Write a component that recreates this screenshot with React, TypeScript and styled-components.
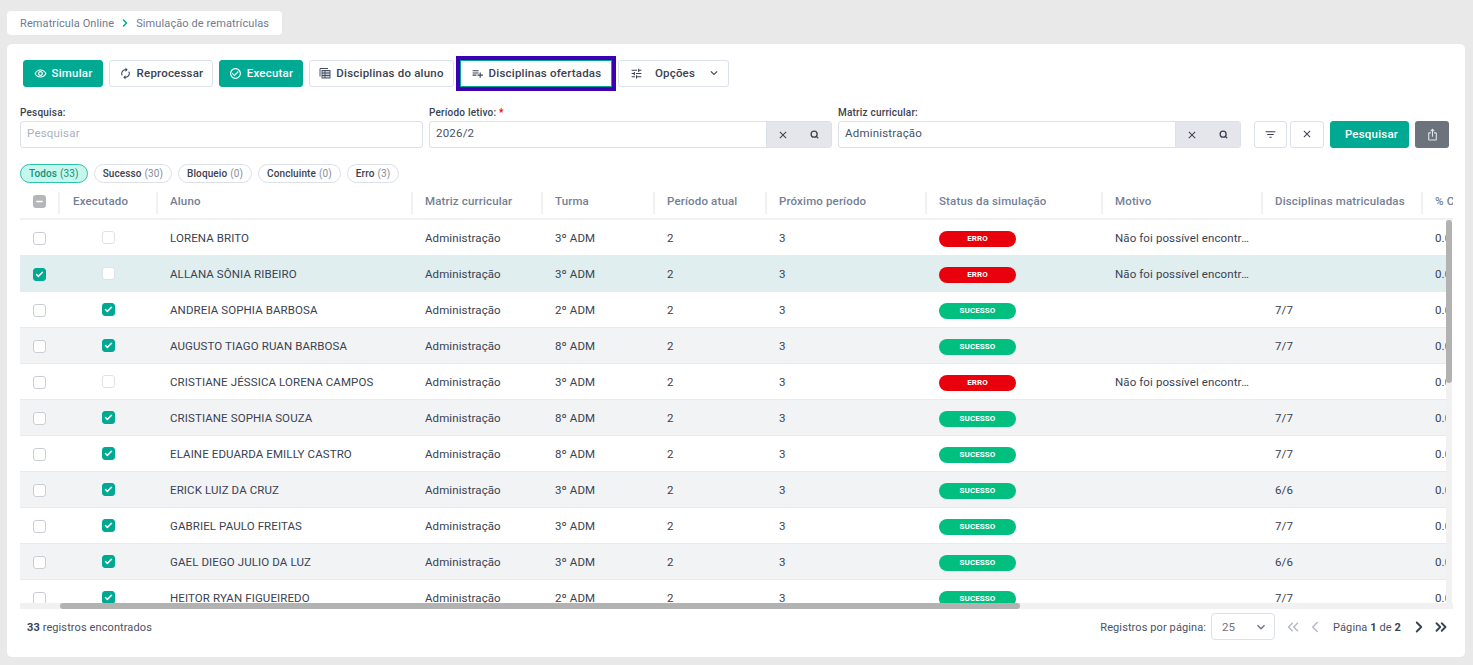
import React from 'react';
import styled, { createGlobalStyle } from 'styled-components';
import {
  ChevronRight,
  ChevronLeft,
  ChevronsLeft,
  ChevronsRight,
  Check,
  Minus,
  Search,
} from 'lucide-react';
import {
  MdAutorenew,
  MdCheckCircleOutline,
  MdClose,
  MdFilterList,
  MdIosShare,
  MdKeyboardArrowDown,
  MdOutlineRemoveRedEye,
  MdPlaylistAdd,
  MdTune,
} from 'react-icons/md';

const GRID = '39px 98px 255px 130px 112px 112px 160px 176px 160px 160px 120px';

interface Student {
  name: string;
  turma: string;
  ok: boolean;
  disc?: string;
  selected?: boolean;
}

const students: Student[] = [
  { name: 'LORENA BRITO', turma: '3º ADM', ok: false },
  { name: 'ALLANA SÔNIA RIBEIRO', turma: '3º ADM', ok: false, selected: true },
  { name: 'ANDREIA SOPHIA BARBOSA', turma: '2º ADM', ok: true, disc: '7/7' },
  { name: 'AUGUSTO TIAGO RUAN BARBOSA', turma: '8º ADM', ok: true, disc: '7/7' },
  { name: 'CRISTIANE JÉSSICA LORENA CAMPOS', turma: '3º ADM', ok: false },
  { name: 'CRISTIANE SOPHIA SOUZA', turma: '8º ADM', ok: true, disc: '7/7' },
  { name: 'ELAINE EDUARDA EMILLY CASTRO', turma: '8º ADM', ok: true, disc: '7/7' },
  { name: 'ERICK LUIZ DA CRUZ', turma: '3º ADM', ok: true, disc: '6/6' },
  { name: 'GABRIEL PAULO FREITAS', turma: '3º ADM', ok: true, disc: '7/7' },
  { name: 'GAEL DIEGO JULIO DA LUZ', turma: '3º ADM', ok: true, disc: '6/6' },
  { name: 'HEITOR RYAN FIGUEIREDO', turma: '2º ADM', ok: true, disc: '7/7' },
];

const headers = [
  'Executado',
  'Aluno',
  'Matriz curricular',
  'Turma',
  'Período atual',
  'Próximo período',
  'Status da simulação',
  'Motivo',
  'Disciplinas matriculadas',
  '% Conclusão',
];

const pills = [
  { label: 'Todos', count: 33, active: true },
  { label: 'Sucesso', count: 30 },
  { label: 'Bloqueio', count: 0 },
  { label: 'Concluinte', count: 0 },
  { label: 'Erro', count: 3 },
];

const GlobalStyle = createGlobalStyle`
  html, body {
    margin: 0;
    height: 665px;
    overflow: hidden;
    background: #e9e9e9;
    font-family: Roboto, "Liberation Sans", sans-serif;
    font-size: 12px;
    color: #3a4252;
  }
  * {
    box-sizing: border-box;
  }
`;

const Page = styled.div`
  padding: 11px 8px 8px 7px;
  display: flex;
  flex-direction: column;
  gap: 9px;
  height: 665px;
`;

const Breadcrumb = styled.nav`
  align-self: flex-start;
  display: flex;
  align-items: center;
  gap: 5px;
  height: 24px;
  padding: 0 13px;
  background: #fff;
  border-radius: 4px;
  color: #6f7b8f;
  font-size: 11px;
  letter-spacing: 0.1px;
  white-space: nowrap;
  svg {
    color: #00a991;
  }
`;

const Card = styled.main`
  flex: 1;
  background: #fff;
  border-radius: 5px;
  padding: 16px 0 0 13px;
  display: flex;
  flex-direction: column;
  min-height: 0;
`;

const Toolbar = styled.div`
  display: flex;
  gap: 6px;
  padding-left: 3px;
  height: 27px;
`;

const Button = styled.button<{ $primary?: boolean; $width: number; $focus?: boolean }>`
  width: ${p => p.$width}px;
  height: 27px;
  flex: none;
  padding: 0 0 1px;
  display: flex;
  align-items: center;
  justify-content: center;
  gap: 5px;
  border-radius: ${p => (p.$focus ? 0 : 3)}px;
  font-family: inherit;
  font-size: 11.5px;
  font-weight: 500;
  letter-spacing: 0.2px;
  border: 1px solid ${p => (p.$primary ? '#00a991' : '#dbe0ea')};
  background: ${p => (p.$primary ? '#00a991' : '#fff')};
  color: ${p => (p.$primary ? '#fff' : '#3a4252')};
  ${p => p.$focus && 'border-color: #00a991; outline: 4px solid #3d00b0; outline-offset: 0;'}
`;

const OptionsButton = styled(Button)`
  padding-left: 4px;
`;

const OptionsLabel = styled.span`
  margin: 0 7px;
`;

const Filters = styled.div`
  display: flex;
  align-items: flex-end;
  margin-top: 20px;
`;

const Field = styled.label`
  width: 403px;
  margin-right: 6px;
  display: flex;
  flex-direction: column;
  gap: 2px;
  font-size: 10px;
  font-weight: 500;
  line-height: 12px;
  letter-spacing: 0.2px;
  color: #3a4252;
`;

const SearchField = styled(Field)`
  width: 402.5px;
  margin-right: 6.5px;
`;

const Required = styled.span`
  color: #e8000d;
`;

const InputBox = styled.div`
  display: flex;
  height: 27px;
  border: 1px solid #dbe0ea;
  border-radius: 3px;
  overflow: hidden;
`;

const InputText = styled.span<{ $placeholder?: boolean }>`
  flex: 1;
  padding-left: 6px;
  font-size: 11.5px;
  font-weight: 400;
  line-height: 23px;
  letter-spacing: 0.2px;
  color: ${p => (p.$placeholder ? '#a9b1c0' : '#4a5264')};
`;

const InputAddon = styled.div`
  width: 65px;
  display: flex;
  align-items: center;
  justify-content: space-between;
  padding: 0 12px 0 10px;
  background: #e4e6eb;
  border-left: 1px solid #dbe0ea;
  color: #3a4252;
`;

const FilterActions = styled.div`
  display: flex;
  gap: 3px;
  margin-left: 7px;
`;

const FilterSubmit = styled(Button)`
  margin-left: 3px;
  padding-left: 4px;
`;

const ExportButton = styled.button`
  width: 34px;
  height: 27px;
  margin-left: 3px;
  padding: 0;
  display: flex;
  align-items: center;
  justify-content: center;
  border: 0;
  border-radius: 3px;
  background: #6c737d;
  color: #e4e6eb;
`;

const Pills = styled.div`
  display: flex;
  gap: 6px;
  margin-top: 16px;
  height: 19px;
`;

const Pill = styled.span<{ $active?: boolean }>`
  display: flex;
  align-items: center;
  padding: 0 8px;
  gap: 3px;
  border-radius: 10px;
  font-size: 10px;
  font-weight: 500;
  letter-spacing: 0.1px;
  border: 1px solid ${p => (p.$active ? '#2cc4ab' : '#dbe0ea')};
  background: ${p => (p.$active ? '#c6f6ec' : '#fff')};
  color: ${p => (p.$active ? '#13917e' : '#3a4252')};
  em {
    font-style: normal;
    font-weight: 400;
    color: ${p => (p.$active ? '#13917e' : '#858d9c')};
  }
`;

const TableArea = styled.div`
  position: relative;
  margin-top: 7px;
  width: 1433px;
  height: 419px;
  overflow: hidden;
`;

const HeaderRow = styled.div`
  display: grid;
  grid-template-columns: ${GRID};
  height: 30px;
  padding-top: 2px;
  border-bottom: 2px solid #f0f1f4;
  align-items: start;
`;

const HeaderCell = styled.div`
  height: 22px;
  margin-left: -1px;
  padding-left: 12px;
  border-left: 2px solid #eff1f5;
  line-height: 18px;
  font-size: 11.5px;
  font-weight: 500;
  letter-spacing: 0.15px;
  color: #737f95;
  white-space: nowrap;
  overflow: hidden;
  &:nth-of-type(1) {
    padding-left: 13px;
  }
`;

const Body = styled.div`
  width: 1426px;
  height: 383px;
  overflow: hidden;
`;

const Row = styled.div<{ $striped: boolean; $selected?: boolean }>`
  display: grid;
  grid-template-columns: ${GRID};
  height: 36px;
  align-items: center;
  border-bottom: 1px solid #e8eaee;
  background: ${p => (p.$selected ? '#e0eeef' : p.$striped ? '#f2f3f5' : '#fff')};
`;

const Cell = styled.div`
  padding-left: 13px;
  font-size: 11.5px;
  letter-spacing: 0.1px;
  color: #3a4252;
  white-space: nowrap;
  overflow: hidden;
`;

const BoxCell = styled.div`
  display: flex;
  justify-content: center;
`;

const SelectCell = styled(BoxCell)`
  padding-top: 2px;
`;

const CheckBox = styled.span<{ $checked?: boolean; $muted?: boolean }>`
  width: 13px;
  height: 13px;
  display: flex;
  align-items: center;
  justify-content: center;
  border-radius: 3px;
  border: 1px solid ${p => (p.$checked ? '#00a991' : p.$muted ? '#dfe2e8' : '#c9ced7')};
  background: ${p => (p.$checked ? '#00a991' : '#fff')};
  color: #fff;
`;

const HeaderBox = styled.span`
  width: 13px;
  height: 13px;
  margin: 3px auto 0;
  display: flex;
  align-items: center;
  justify-content: center;
  border-radius: 3px;
  background: #b4b6b9;
  color: #fff;
`;

const Status = styled.span<{ $ok: boolean }>`
  display: block;
  width: 77px;
  height: 16px;
  margin-top: 3px;
  border-radius: 8px;
  text-align: center;
  font-size: 8px;
  font-weight: 700;
  line-height: 16px;
  letter-spacing: 0.1px;
  color: #fff;
  background: ${p => (p.$ok ? '#00bf7f' : '#e8000d')};
`;

const Ellipsis = styled(Cell)`
  text-overflow: ellipsis;
  width: 150px;
`;

const VerticalTrack = styled.div`
  position: absolute;
  top: 30px;
  right: 1px;
  width: 6px;
  height: 383px;
  background: #f1f1f1;
`;

const VerticalThumb = styled.div`
  height: 163px;
  border-radius: 3px;
  background: #b2b2b2;
`;

const HorizontalTrack = styled.div`
  position: absolute;
  left: 0;
  bottom: 0;
  width: 100%;
  height: 6px;
  padding-left: 40px;
  background: #f1f1f1;
`;

const HorizontalThumb = styled.div`
  width: 960px;
  height: 6px;
  border-radius: 3px;
  background: #b2b2b2;
`;

const Footer = styled.footer`
  display: flex;
  align-items: center;
  justify-content: space-between;
  height: 27px;
  margin-top: 4px;
  padding: 1px 5px 0 7px;
  width: 1436px;
  font-size: 11px;
  color: #4a5264;
  letter-spacing: 0.1px;
  b {
    font-weight: 700;
    color: #3a4252;
  }
`;

const Pagination = styled.div`
  display: flex;
  align-items: center;
`;

const PageSize = styled.div`
  width: 64px;
  height: 27px;
  margin: -1px 8px 0 5px;
  padding: 0 5px 0 10px;
  display: flex;
  align-items: center;
  justify-content: space-between;
  border: 1px solid #dbe0ea;
  border-radius: 4px;
  font-size: 11.5px;
  color: #6c7485;
`;

const PagerIcon = styled.span<{ $disabled?: boolean }>`
  display: flex;
  width: 20px;
  margin-right: 2px;
  justify-content: center;
  color: ${p => (p.$disabled ? '#b4bac6' : '#3a4252')};
  &:last-child {
    margin-right: 0;
  }
`;

const PageLabel = styled.span`
  margin: 0 8px 0 6px;
`;

function StudentRow({ student, index }: { student: Student; index: number }) {
  return (
    <Row $striped={index % 2 === 1} $selected={student.selected}>
      <SelectCell>
        <CheckBox $checked={student.selected}>
          {student.selected && <Check size={9} strokeWidth={4} />}
        </CheckBox>
      </SelectCell>
      <BoxCell>
        <CheckBox $checked={student.ok} $muted>
          {student.ok && <Check size={9} strokeWidth={4} />}
        </CheckBox>
      </BoxCell>
      <Cell>{student.name}</Cell>
      <Cell>Administração</Cell>
      <Cell>{student.turma}</Cell>
      <Cell>2</Cell>
      <Cell>3</Cell>
      <Cell>
        <Status $ok={student.ok}>{student.ok ? 'SUCESSO' : 'ERRO'}</Status>
      </Cell>
      {student.ok ? <Cell /> : <Ellipsis>Não foi possível encontrar a matriz</Ellipsis>}
      <Cell>{student.disc}</Cell>
      <Cell>0.00</Cell>
    </Row>
  );
}

export default function App() {
  return (
    <>
      <GlobalStyle />
      <Page>
        <Breadcrumb>
          Rematrícula Online
          <ChevronRight size={12} strokeWidth={3} />
          Simulação de rematrículas
        </Breadcrumb>
        <Card>
          <Toolbar>
            <Button $primary $width={80}>
              <MdOutlineRemoveRedEye size={13} />
              Simular
            </Button>
            <Button $width={104}>
              <MdAutorenew size={13} />
              Reprocessar
            </Button>
            <Button $primary $width={84}>
              <MdCheckCircleOutline size={13} />
              Executar
            </Button>
            <Button $width={145}>
              <svg width="12" height="12" viewBox="0 0 12 12" fill="none" stroke="#4a5264" strokeWidth="1">
                <path d="M1 9.5V1.5H9" />
                <rect x="3" y="3.5" width="8" height="7.5" fill="#c9ced7" />
                <path d="M3 6h8M3 8.5h8M6 3.5V11" />
              </svg>
              Disciplinas do aluno
            </Button>
            <Button $width={152} $focus>
              <MdPlaylistAdd size={13} />
              Disciplinas ofertadas
            </Button>
            <OptionsButton $width={111}>
              <MdTune size={13} />
              <OptionsLabel>Opções</OptionsLabel>
              <MdKeyboardArrowDown size={14} />
            </OptionsButton>
          </Toolbar>
          <Filters>
            <SearchField>
              Pesquisa:
              <InputBox>
                <InputText $placeholder>Pesquisar</InputText>
              </InputBox>
            </SearchField>
            <Field>
              <span>
                Período letivo: <Required>*</Required>
              </span>
              <InputBox>
                <InputText>2026/2</InputText>
                <InputAddon>
                  <MdClose size={12} />
                  <Search size={9} strokeWidth={3.5} />
                </InputAddon>
              </InputBox>
            </Field>
            <Field>
              Matriz curricular:
              <InputBox>
                <InputText>Administração</InputText>
                <InputAddon>
                  <MdClose size={12} />
                  <Search size={9} strokeWidth={3.5} />
                </InputAddon>
              </InputBox>
            </Field>
            <FilterActions>
              <Button $width={33}>
                <MdFilterList size={13} />
              </Button>
              <Button $width={34}>
                <MdClose size={12} />
              </Button>
              <FilterSubmit $primary $width={79}>
                Pesquisar
              </FilterSubmit>
              <ExportButton aria-label="Exportar">
                <MdIosShare size={13} />
              </ExportButton>
            </FilterActions>
          </Filters>
          <Pills>
            {pills.map(pill => (
              <Pill key={pill.label} $active={pill.active}>
                {pill.label} <em>({pill.count})</em>
              </Pill>
            ))}
          </Pills>
          <TableArea>
            <HeaderRow>
              <HeaderBox>
                <Minus size={9} strokeWidth={4} />
              </HeaderBox>
              {headers.map(header => (
                <HeaderCell key={header}>{header}</HeaderCell>
              ))}
            </HeaderRow>
            <Body>
              {students.map((student, index) => (
                <StudentRow key={student.name} student={student} index={index} />
              ))}
            </Body>
            <VerticalTrack>
              <VerticalThumb />
            </VerticalTrack>
            <HorizontalTrack>
              <HorizontalThumb />
            </HorizontalTrack>
          </TableArea>
          <Footer>
            <span>
              <b>33</b> registros encontrados
            </span>
            <Pagination>
              Registros por página:
              <PageSize>
                25
                <MdKeyboardArrowDown size={16} />
              </PageSize>
              <PagerIcon $disabled>
                <ChevronsLeft size={18} strokeWidth={2} />
              </PagerIcon>
              <PagerIcon $disabled>
                <ChevronLeft size={18} strokeWidth={2} />
              </PagerIcon>
              <PageLabel>
                Página <b>1</b> de <b>2</b>
              </PageLabel>
              <PagerIcon>
                <ChevronRight size={18} strokeWidth={2.5} />
              </PagerIcon>
              <PagerIcon>
                <ChevronsRight size={18} strokeWidth={2.5} />
              </PagerIcon>
            </Pagination>
          </Footer>
        </Card>
      </Page>
    </>
  );
}
